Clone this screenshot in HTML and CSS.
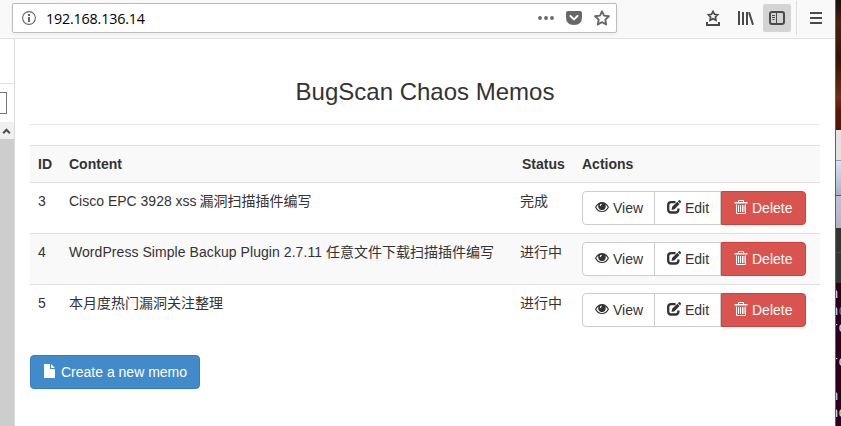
FILE: index.html
```html
<!DOCTYPE html>
<html lang="zh-CN">
<head>
<meta charset="utf-8">
<title>BugScan Chaos Memos</title>
<link rel="stylesheet" href="styles.css">
</head>
<body>
<svg class="defs" width="0" height="0">
  <symbol id="eye" viewBox="0 0 14 14"><path fill="currentColor" fill-rule="evenodd" d="M7 2C4 2 1.500 4 0 7.200c1.500 3.200 4 4.900 7 4.900s5.500-1.700 7-4.900C12.500 4 10 2 7 2ZM3.600 4.400C3 5.400 3 7.300 3.900 8.400c1.400 2 4.800 2 6.200 0 .8-1.100.8-3 .3-4C11.400 5.100 12.200 6.200 12.700 7.200 11.400 9.600 9.500 10.900 7 10.900S2.600 9.600 1.300 7.200C1.800 6.200 2.600 5.100 3.600 4.400ZM6.500 3.700c-1 .1-1.700.9-1.700 2 .1.600 1 .6 1.100 0 0-.6.300-1 .9-1.100.6-.2.300-1-.3-.9Z"/></symbol>
  <symbol id="edit" viewBox="0 0 14 14"><path fill="none" stroke="currentColor" stroke-width="2.300" d="M8.500 2.200H4.200Q1.200 2.200 1.200 5v4.500q0 3 3 3h4.200q3 0 3-3V8.500"/><path fill="currentColor" d="M4.500 10 5.200 6.800 10.300 1.800 12.500 4 7.500 9.200ZM10.900 1.200 11.900.2q.5-.3 1 .1l1 1q.3.500 0 1L13.100 3.400Z"/></symbol>
  <symbol id="trash" viewBox="0 0 14 14"><path fill="none" stroke="currentColor" d="M4.500 2V.5h5V2M2.500 4.500v9h9v-9M4.500 5v7M6.500 5v7M8.500 5v7M10 5v7"/><path fill="currentColor" d="M.5 2h13v1.500H.5Z"/></symbol>
  <symbol id="file" viewBox="0 0 14 14"><path fill="currentColor" d="M1 0h6v5h5v9H1ZM8 0l4 4H8Z"/></symbol>
  <symbol id="star" viewBox="0 0 16 16"><path fill="none" stroke="currentColor" stroke-width="1.900" stroke-linejoin="round" d="m8 1.300 2 4.300 4.900.6-3.600 3.400.9 4.900L8 12.200l-4.200 2.300.9-4.900L1.100 6.200 6 5.600Z"/></symbol>
</svg>
<div class="desktop">
  <div class="window">
    <header class="toolbar">
      <div class="urlbar">
        <svg class="info" viewBox="0 0 14 14"><circle cx="7" cy="7" r="6.400" fill="none" stroke="currentColor" stroke-width="1.100"/><path fill="currentColor" d="M6 3h2v2H6ZM6 6h2v5H6Z"/></svg>
        <span class="address">192.168.136.14</span>
        <svg class="dots" viewBox="0 0 16 4"><circle cx="2" cy="2" r="1.900"/><circle cx="8" cy="2" r="1.900"/><circle cx="14" cy="2" r="1.900"/></svg>
        <svg class="pocket" viewBox="0 0 16 14"><path fill="currentColor" d="M2 0h12q2 0 2 2v4q0 8-8 8T0 6V2Q0 0 2 0Z"/><path fill="none" stroke="#fff" stroke-width="2" stroke-linecap="round" stroke-linejoin="round" d="m4.500 5 3.500 3.400L11.500 5"/></svg>
        <svg class="star"><use href="#star"/></svg>
      </div>
      <div class="tools">
        <svg class="tray" viewBox="0 0 14 16"><path fill="none" stroke="currentColor" stroke-width="1.700" d="m7 1.500 1.500 2.800 3.100.5-2.200 2.200.5 3.200L7 8.800l-2.900 1.400.5-3.200-2.200-2.200 3.100-.5Z"/><path fill="none" stroke="currentColor" stroke-width="2" d="M1 12v3h12v-3"/></svg>
        <svg class="library" viewBox="0 0 16 14"><path fill="none" stroke="currentColor" stroke-width="2" d="M1 0v14M5 1v13M9 1v13M11 1.200l4 12.600"/></svg>
        <span class="toggle"><svg class="panel" viewBox="0 0 16 14"><rect x="1" y="1" width="14" height="12" rx="2" fill="none" stroke="currentColor" stroke-width="2"/><path fill="none" stroke="currentColor" d="M7.500 2v10M3 4.500h3M3 6.500h3M3.500 8.500h2"/></svg></span>
        <span class="separator"></span>
        <svg class="menu" viewBox="0 0 12 12"><path fill="none" stroke="currentColor" stroke-width="2" d="M0 1h12M0 6h12M0 11h12"/></svg>
      </div>
    </header>
    <div class="view">
      <aside class="sidebar">
        <div class="side-head"></div>
        <div class="side-search"><div class="side-input"></div></div>
        <div class="scroll-up"><svg class="arrow" viewBox="0 0 8 6"><path fill="none" stroke="#505050" stroke-width="2" d="m.7 5.200 3.300-3.500 3.300 3.500"/></svg></div>
        <div class="scroll-thumb"></div>
      </aside>
      <main class="page">
        <h1>BugScan Chaos Memos</h1>
        <hr>
        <table>
          <thead><tr><th class="id">ID</th><th class="content">Content</th><th class="status">Status</th><th>Actions</th></tr></thead>
          <tbody>
            <tr><td>3</td><td>Cisco EPC 3928 xss <span class="han">漏洞扫描插件编写</span></td><td>完成</td><td><div class="group"><a class="btn view-btn"><svg><use href="#eye"/></svg>View</a><a class="btn edit-btn"><svg><use href="#edit"/></svg>Edit</a><a class="btn danger"><svg><use href="#trash"/></svg>Delete</a></div></td></tr>
            <tr><td>4</td><td><span class="wide">WordPress Simple Backup Plugin 2.7.11 </span>任意文件下载扫描插件编写</td><td>进行中</td><td><div class="group"><a class="btn view-btn"><svg><use href="#eye"/></svg>View</a><a class="btn edit-btn"><svg><use href="#edit"/></svg>Edit</a><a class="btn danger"><svg><use href="#trash"/></svg>Delete</a></div></td></tr>
            <tr><td>5</td><td>本月度热门漏洞关注整理</td><td>进行中</td><td><div class="group"><a class="btn view-btn"><svg><use href="#eye"/></svg>View</a><a class="btn edit-btn"><svg><use href="#edit"/></svg>Edit</a><a class="btn danger"><svg><use href="#trash"/></svg>Delete</a></div></td></tr>
          </tbody>
        </table>
        <a class="btn primary"><svg><use href="#file"/></svg>Create a new memo</a>
      </main>
    </div>
  </div>
  <div class="behind">
    <div class="wallpaper"></div>
    <div class="titlebar"></div>
    <div class="tabs"></div>
    <div class="lilac"></div>
    <div class="dark-top"></div>
    <div class="dark-bottom"></div>
    <div class="terminal"><span>n'</span><span>n<b>d</b></span><span>ro</span><span></span><span>ro</span><span></span><span>n'</span><span>no</span></div>
  </div>
</div>
</body>
</html>
```

FILE: styles.css
```css
* { box-sizing: border-box; }
body {
  margin: 0;
  overflow: hidden;
  color: #333;
  font: 14px/20px "Liberation Sans", "Noto Sans CJK SC", sans-serif;
}
svg { display: block; flex: none; }
.defs { position: absolute; }
.desktop { display: flex; width: 841px; height: 426px; }
.window {
  display: flex;
  flex-direction: column;
  width: 836px;
  border-right: 1px solid #1c72bd;
  background: #fff;
}

.toolbar {
  display: flex;
  height: 39px;
  padding-left: 12px;
  background: #f9f9fa;
  border-bottom: 1px solid #e0e0e1;
  color: #4a4a4a;
}
.urlbar {
  display: flex;
  align-items: center;
  width: 605px;
  height: 30px;
  margin-top: 3px;
  padding: 0 6px 0 9px;
  background: #fff;
  border: 1px solid #bdbdbd;
  border-radius: 2px;
  box-shadow: 0 1px 4px rgba(0, 0, 0, .06);
  color: #676767;
}
.info { width: 14px; height: 14px; }
.address {
  flex: 1;
  margin-left: 10px;
  padding-top: 1px;
  color: #000;
  font: 14.3px/20px "Open Sans", sans-serif;
  letter-spacing: -.17px;
}
.dots { width: 16px; height: 4px; fill: currentColor; }
.pocket { width: 16px; height: 14px; margin-left: 12px; }
.star { width: 16px; height: 16px; margin-left: 12px; }
.tools { display: flex; align-items: center; height: 36px; margin-left: 89px; }
.tray { width: 14px; height: 16px; }
.library { width: 16px; height: 14px; margin-left: 18px; }
.toggle {
  display: flex;
  align-items: center;
  justify-content: center;
  width: 28px;
  height: 28px;
  margin-left: 9px;
  background: #d4d4d5;
  border-radius: 2px;
}
.panel { width: 16px; height: 14px; }
.separator { width: 1px; height: 34px; margin-left: 5px; background: #dedede; }
.menu { width: 12px; height: 12px; margin-left: 13px; }

.view { display: flex; flex: 1; }
.sidebar {
  display: flex;
  flex-direction: column;
  width: 15px;
  border-right: 1px solid #dcdcdc;
}
.side-head { height: 45px; border-bottom: 1px solid #dfdfdf; }
.side-search { height: 38px; padding-top: 8px; }
.side-input { width: 7px; height: 22px; border: 1px solid #767676; border-left: 0; }
.scroll-up { height: 17px; padding: 6px 0 0 2px; background: #f0f0f0; }
.arrow { width: 9px; height: 6px; }
.scroll-thumb { flex: 1; background: #cdcdcd; }

.page { width: 820px; padding: 38px 15px 0; }
h1 { margin: 0; font-size: 24px; line-height: 30px; font-weight: 400; text-align: center; }
hr { height: 1px; margin: 17px 0 20px; border: 0; background: #eaeaea; }
table { width: 100%; table-layout: fixed; border-collapse: separate; border-spacing: 0; }
th, td { padding: 8px; border-top: 1px solid #ddd; text-align: left; vertical-align: top; white-space: nowrap; }
th { height: 37px; line-height: 20px; }
td { height: 51px; }
td:nth-child(3) { padding-left: 7px; }
.han { margin-left: -1px; }
.wide { letter-spacing: .06px; }
.id { width: 31px; }
.content { width: 452px; }
.status { width: 61px; padding-left: 9px; }
thead tr, tbody tr:nth-child(even) { background: #f9f9f9; }
.group { display: flex; }
.btn {
  display: flex;
  align-items: center;
  height: 34px;
  padding: 0 12px;
  background: #fff;
  border: 1px solid #ccc;
  border-radius: 4px;
  white-space: nowrap;
}
.btn svg { width: 14px; height: 14px; margin: -2px 4px 0 0; }
.view-btn { width: 73px; border-radius: 4px 0 0 4px; }
.edit-btn { width: 67px; margin-left: -1px; border-radius: 0; }
.danger { width: 85px; background: #d9534f; border-color: #d43f3a; border-radius: 0 4px 4px 0; color: #fff; }
.primary { width: 170px; margin-top: 20px; background: #428bca; border-color: #357ebd; color: #fff; }

.behind { width: 5px; overflow: hidden; }
.wallpaper { height: 130px; background: linear-gradient(#17110e, #4b1f12 18%, #351308 45%, #70300f 75%, #5b1608 85%, #551308); }
.titlebar { height: 31px; background: #e3e3e3; border-bottom: 1px solid #7f9fc9; }
.tabs { height: 35px; background: linear-gradient(#d7e3f1, #a3b4c9); border-bottom: 1px solid #555; }
.lilac { height: 32px; background: linear-gradient(#c0c2d8, #b2b4c5); }
.dark-top { height: 25px; background: #333; border-bottom: 1px solid #484848; }
.dark-bottom { height: 30px; background: #353535; }
.terminal { height: 143px; padding-top: 3px; background: #2c001e; color: #d8e6e8; }
.terminal span { display: block; height: 17px; margin-left: -6px; font: 14px/17px "Liberation Mono", monospace; }
.terminal b { color: #5f6fe8; font-weight: 400; }
```
